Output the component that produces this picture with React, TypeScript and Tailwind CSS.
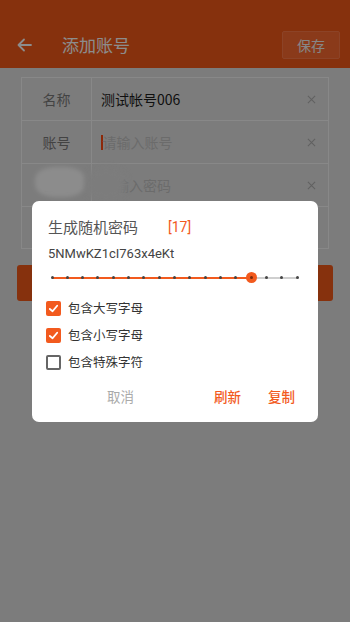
import React from "react";

const FONT = { fontFamily: '"Noto Sans CJK SC", "Noto Sans", sans-serif' };
const ORANGE = "#f25a1e";

function XIcon() {
  return (
    <svg width="9" height="9" viewBox="0 0 10 10" fill="none" stroke="#b0b0b0" strokeWidth="1.2">
      <path d="M1 1 L9 9 M9 1 L1 9" />
    </svg>
  );
}

function Row({ label, children, last }: { label: string; children: React.ReactNode; last?: boolean }) {
  return (
    <div className={"flex h-[43px] items-center border-[#f7f7f7] border-t" + (last ? " border-b" : "")}>
      <div className="flex h-full w-[70px] items-center justify-center border-r border-[#f7f7f7] text-[14px] text-[#7a7a7a]">
        {label}
      </div>
      <div className="flex flex-1 items-center pl-[9px] pr-[12px] text-[14px]">{children}</div>
    </div>
  );
}

function Check({ checked, label }: { checked: boolean; label: string }) {
  return (
    <div className="flex h-[27px] items-center">
      {checked ? (
        <div className="flex h-[15px] w-[15px] items-center justify-center rounded-[2px]" style={{ background: ORANGE }}>
          <svg width="11" height="11" viewBox="0 0 12 12" fill="none" stroke="#fff" strokeWidth="2" strokeLinecap="round" strokeLinejoin="round">
            <path d="M2 6.5 L5 9 L10 3" />
          </svg>
        </div>
      ) : (
        <div className="h-[15px] w-[15px] rounded-[2px] border-[2px] border-[#666]" />
      )}
      <span className="ml-[7px] text-[12.5px] text-[#333]">{label}</span>
    </div>
  );
}

function Slider() {
  const n = 17;
  const idx = 13;
  const step = 245 / (n - 1);
  return (
    <div className="relative ml-[20px] h-[14px] w-[245px]">
      <div className="absolute left-0 top-[6px] h-[2px] w-full bg-[#cfcfcf]" />
      <div className="absolute left-0 top-[6px] h-[2px]" style={{ width: idx * step, background: ORANGE }} />
      {Array.from({ length: n }).map((_, i) =>
        i === idx ? null : (
          <div
            key={i}
            className="absolute top-[5.5px] h-[3px] w-[3px] rounded-full bg-[#444]"
            style={{ left: i * step - 1.5 }}
          />
        )
      )}
      <div
        className="absolute top-[1.5px] flex h-[11px] w-[11px] items-center justify-center rounded-full"
        style={{ left: idx * step - 5.5, background: ORANGE }}
      >
        <div className="h-[3px] w-[3px] rounded-full bg-[#7a2a0a]" />
      </div>
    </div>
  );
}

export default function App() {
  return (
    <div className="relative h-[622px] w-[350px] overflow-hidden bg-[#e2e2e2]" style={FONT}>
      {/* header */}
      <div className="flex h-[68px] items-end bg-[#f55a18] pb-[9px]">
        <div className="flex h-[28px] w-full items-center">
          <svg className="ml-[17px]" width="15" height="14" viewBox="0 0 15 14" fill="none" stroke="#fff" strokeWidth="1.8" strokeLinecap="round" strokeLinejoin="round">
            <path d="M14 7 H1.5 M7 1.5 L1.5 7 L7 12.5" />
          </svg>
          <span className="ml-[30px] text-[17px] text-white">添加账号</span>
          <div className="ml-auto mr-[10px] flex h-[28px] w-[58px] items-center justify-center rounded-[2px] border border-[#ff7a48] bg-[#fb6a30] text-[14px] text-[#f4f4f4]">
            保存
          </div>
        </div>
      </div>

      {/* form */}
      <div className="mx-[21px] mt-[9px] border-x border-[#f7f7f7]">
        <Row label="名称">
          <span className="text-[#1c1c1c]">测试帐号006</span>
          <span className="ml-auto"><XIcon /></span>
        </Row>
        <Row label="账号">
          <span className="h-[15px] w-[1.5px]" style={{ background: "#ff4a10" }} />
          <span className="text-[#c4c4c4]">请输入账号</span>
          <span className="ml-auto"><XIcon /></span>
        </Row>
        <Row label="密码">
          <span className="text-[#c4c4c4]">请输入密码</span>
          <span className="ml-auto"><XIcon /></span>
        </Row>
        <Row label="" last>
          <span />
        </Row>
      </div>

      <div className="mx-[17px] mt-[16px] h-[36px] rounded-[3px] bg-[#f55a18]" />

      {/* smudges */}
      <div className="absolute left-[35px] top-[167px] h-[30px] w-[50px] rounded-[40%] bg-white blur-[2px]" />
      <div className="absolute left-[86px] top-[168px] h-[32px] w-[40px] rounded-[40%] bg-[#e2e2e2] blur-[3px]" />

      {/* backdrop */}
      <div className="absolute inset-0 bg-black/[0.45]" />

      {/* dialog */}
      <div className="absolute inset-0 flex items-center justify-center">
        <div className="w-[286px] rounded-[7px] bg-white pb-[10px] pt-[18px]">
          <div className="flex h-[18px] items-center pl-[16px]">
            <span className="text-[15px] text-[#555]">生成随机密码</span>
            <span className="ml-[30px] text-[14px]" style={{ color: ORANGE, fontFamily: "Roboto, sans-serif" }}>[17]</span>
          </div>
          <div className="mt-[9px] pl-[16px] text-[13px] leading-[16px] text-[#444]" style={{ fontFamily: "Roboto, sans-serif" }}>
            5NMwKZ1cI763x4eKt
          </div>
          <div className="mt-[9px]">
            <Slider />
          </div>
          <div className="mt-[10px] pl-[14px]">
            <Check checked label="包含大写字母" />
            <Check checked label="包含小写字母" />
            <Check checked={false} label="包含特殊字符" />
          </div>
          <div className="mt-[6px] flex h-[30px] items-center text-[13.5px]">
            <span className="ml-[75px] text-[#aaa]">取消</span>
            <span className="ml-[80px] font-medium" style={{ color: ORANGE }}>刷新</span>
            <span className="ml-[27px] font-medium" style={{ color: ORANGE }}>复制</span>
          </div>
        </div>
      </div>
    </div>
  );
}
